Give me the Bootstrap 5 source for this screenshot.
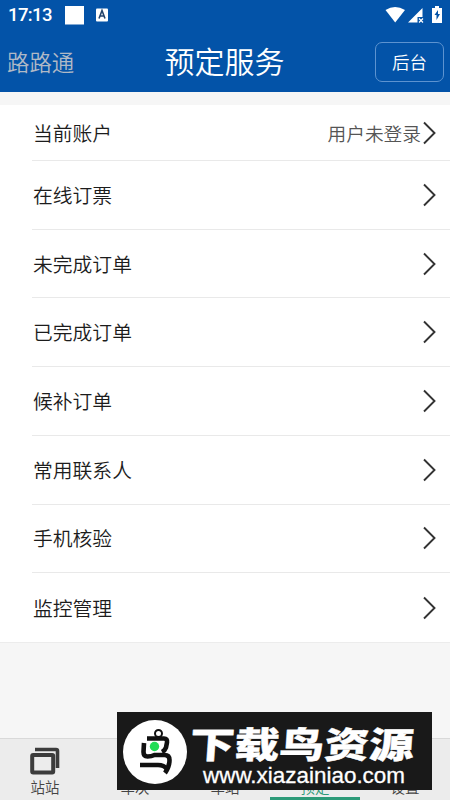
<!DOCTYPE html>
<html lang="zh-CN">
<head>
<meta charset="utf-8">
<meta name="viewport" content="width=device-width, initial-scale=1">
<title>预定服务</title>
<link href="https://cdn.jsdelivr.net/npm/bootstrap@5.3.0/dist/css/bootstrap.min.css" rel="stylesheet">
<style>
body{font-family:"Noto Sans CJK SC DemiLight","Noto Sans CJK SC",sans-serif;font-weight:350;height:800px;background:#f6f6f6;overflow:hidden;color:#1c1c1c}
.app-head{background:#0353a8;height:92px;color:#fff}
.status-line{height:31px;padding:0 7px 0 8px}
.clock{font:500 18.5px/31px Roboto,sans-serif;letter-spacing:-.6px;width:57px}
.title-line{height:61px}
.brand-text{font-size:22.4px;line-height:60px;color:#b0b9c6;width:150px;padding:0 0 2px 7px}
.page-title{font-size:30px;line-height:58px;padding:0 1px 4px 0}
.back-btn,.back-btn:hover{width:69px;height:40px;border:1px solid #5d93d0;border-radius:7px;color:#fff;font-size:17.5px;font-weight:350;line-height:36px;padding:0;margin-right:6px}
.head-side{width:150px}
.menu-list{margin-top:13px;background:#fff;padding-left:32px;border-bottom:1px solid #ececec;height:538px;border-radius:0}
.menu-row{height:68.7px;border:0;border-bottom:1px solid #e9e9e9;border-radius:0!important;padding:0 13px 0 1px;font-size:19.8px;line-height:30px;background:#fff;color:#1c1c1c}
.menu-row:first-child{height:56.1px}
.menu-row:last-child{border-bottom:0}
.account-state{font-size:18.7px;color:#555}
.tab-strip{height:62px;background:#ececec;border-top:1px solid #d9d9d9}
.tab-cell{font-size:14.5px;line-height:20px;color:#444;padding-top:8px;border-bottom:3px solid transparent}
.tab-cell svg{height:28px;margin-bottom:2px}
.tab-cell.current{color:#2d9a78;border-color:#2d9a78}
.watermark{left:117px;top:712px;width:315px;height:78px;background:#191919}
</style>
<script src="https://cdn.jsdelivr.net/npm/bootstrap@5.3.0/dist/js/bootstrap.bundle.min.js"></script>
</head>
<body class="d-flex flex-column position-relative">
<header class="app-head flex-shrink-0">
  <div class="status-line d-flex align-items-center">
    <span class="clock">17:13</span>
    <svg width="44" height="31" viewBox="0 0 44 31"><path fill="#fff" d="M0 6h19v18.500H0z"/><rect x="31" y="8.500" width="12" height="13" rx="1" fill="#fff"/><path d="M34 18.500l3-8 3 8M35 16h4" fill="none" stroke="#24446c" stroke-width="1.600"/></svg>
    <svg class="ms-auto" width="58" height="31" viewBox="0 0 58 31" fill="#fff"><path d="M0.500 10Q10 4 20 10L10.200 22.500z"/><path d="M23 22.500L37.500 8v9h-5v5.500z"/><path d="M34 18.500l4 4m0-4l-4 4" stroke="#fff" stroke-width="1.200"/><path d="M47 8h3V6h4v2h3v15H47z"/><path d="M53 10l-3.500 5h2v5l3.500-6h-2z" fill="#0353a8"/></svg>
  </div>
  <div class="title-line d-flex align-items-center justify-content-between">
    <div class="brand-text">路路通</div>
    <div class="page-title">预定服务</div>
    <div class="head-side d-flex justify-content-end"><button class="btn back-btn">后台</button></div>
  </div>
</header>
<main class="flex-grow-1">
  <div class="menu-list list-group" id="menu"></div>
</main>
<nav class="tab-strip d-flex flex-shrink-0">
  <div class="tab-cell col d-flex flex-column align-items-center"><svg width="30" viewBox="0 0 30 28" fill="none" stroke="#3c3c3c"><rect x="2.200" y="8" width="21" height="17.500" rx="1" stroke-width="4"/><path d="M5 2.500h21q1.500 0 1.500 1.500v17" stroke-width="3.600"/></svg>站站</div>
  <div class="tab-cell col d-flex flex-column align-items-center"><svg width="30"></svg>车次</div>
  <div class="tab-cell col d-flex flex-column align-items-center"><svg width="30"></svg>车站</div>
  <div class="tab-cell current col d-flex flex-column align-items-center"><svg width="30"></svg>预定</div>
  <div class="tab-cell col d-flex flex-column align-items-center"><svg width="30"></svg>设置</div>
</nav>
<div class="watermark position-absolute">
  <svg class="d-block" width="315" height="78" viewBox="0 0 315 78">
    <circle cx="38" cy="40" r="32" fill="#fff"/>
    <g fill="none" stroke="#111" stroke-width="4.600">
      <circle cx="41.500" cy="21.500" r="3.500" stroke-width="2"/>
      <path d="M30 26.500h17q3.500 0 3 4l-1 5q-1 3-4 4.500"/>
      <path d="M27 31l-.5 9q0 4.500 4 4.500 4 0 7-1.500h10q5 0 5 5 0 7-4.500 13"/>
      <path d="M23 53h18q6 0 9 4"/>
    </g>
    <circle cx="37.500" cy="34.500" r="4.700" fill="#20dc55"/>
    <text transform="translate(72 46) skewX(-4)" textLength="224" lengthAdjust="spacingAndGlyphs" font-family="Noto Sans CJK SC, sans-serif" font-weight="900" font-size="36" fill="#fff" stroke="#fff" stroke-width=".4">下载鸟资源</text>
    <text x="86" y="70.500" textLength="202" lengthAdjust="spacingAndGlyphs" font-family="Liberation Sans, sans-serif" font-size="22.500" fill="#fff" stroke="#fff" stroke-width=".3">www.xiazainiao.com</text>
  </svg>
</div>
<script>
const labels=["当前账户","在线订票","未完成订单","已完成订单","候补订单","常用联系人","手机核验","监控管理"];
document.getElementById("menu").innerHTML=labels.map((label,i)=>`<div class="menu-row list-group-item d-flex align-items-center flex-shrink-0"><span>${label}</span><span class="account-state ms-auto">${i?"":"用户未登录"}</span><svg width="16" height="24" viewBox="0 0 16 24" fill="none" stroke="#333" stroke-width="1.900"><path d="M3 1.500L13.500 12 3 22.500"/></svg></div>`).join("");
</script>
</body>
</html>
